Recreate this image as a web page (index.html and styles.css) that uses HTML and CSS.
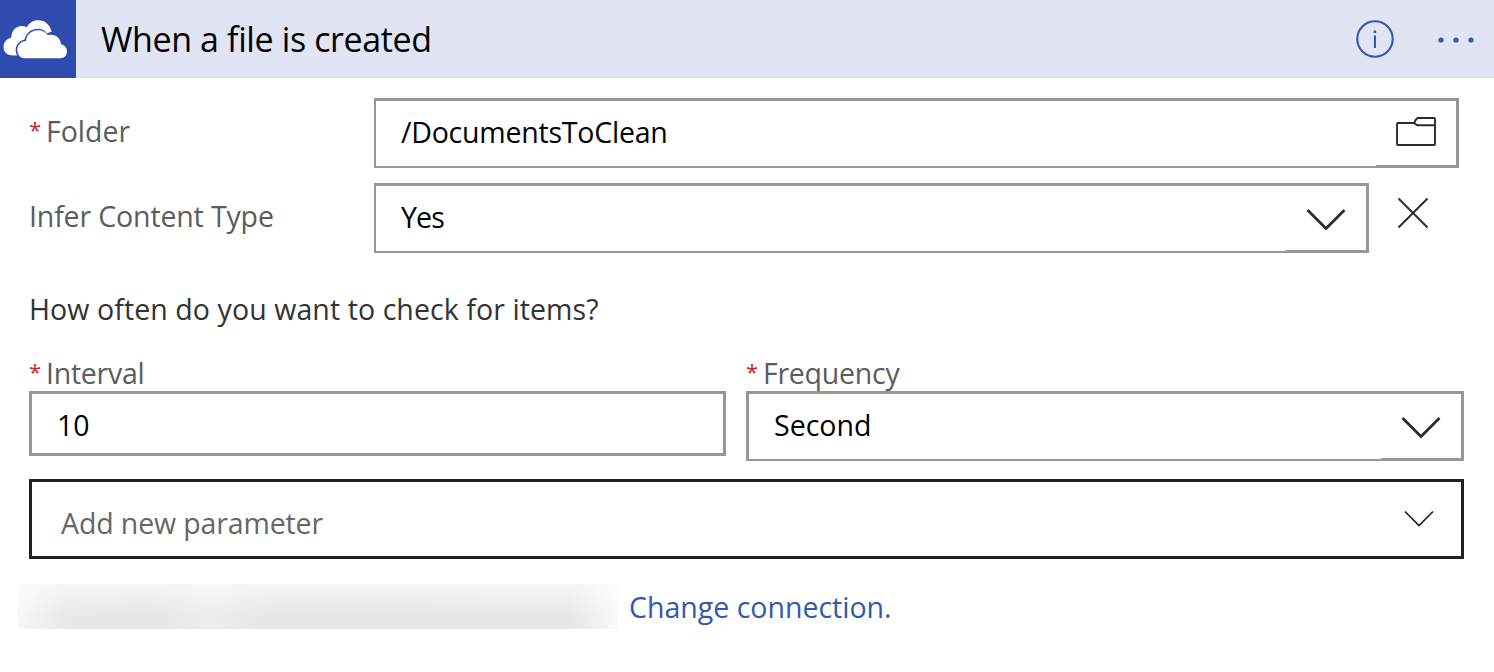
FILE: index.html
```html
<!DOCTYPE html>
<html lang="en">
<head>
<meta charset="utf-8">
<title>When a file is created</title>
<link rel="stylesheet" href="styles.css">
</head>
<body>
<section class="card">
  <header class="card-header">
    <div class="brand">
      <svg width="76" height="78" viewBox="0 0 76 78">
        <path fill="#fff" d="M13.500 55.500C7.500 55.500 3.500 52 3.500 47C3.500 42 7 38.700 11.300 37.800C11.300 31 16 26 21.500 26C23.700 26 25.300 26.400 26.800 27.300C29 23 33 20.300 38 20.300C45 20.300 50.300 25 51.700 32C50 32 48.500 32.600 47 33.600C45 30.500 42 28.700 38 28.700C31.500 28.700 26.500 32.500 24.500 39.500C19 41 15.700 45 15.700 50C15.700 52.200 16.300 54 17.200 55.500Z"/>
        <path fill="#fff" d="M25 58.300C20.500 58.300 17.300 54.700 17.300 50C17.300 45 20.800 41.300 26 41C26.500 34.500 31.500 30.300 38 30.300C42.500 30.300 45.700 32 47.700 35.300C54.500 33.300 60.500 37.500 61 44.300C64.500 45 67 47.800 67 51.300C67 55.300 64.300 58.300 60.500 58.300Z"/>
      </svg>
    </div>
    <h1 class="title">When a file is created</h1>
    <svg class="info" width="40" height="40" viewBox="0 0 40 40">
      <circle cx="20" cy="20" r="17.700" fill="none" stroke="#3159b0" stroke-width="2.100"/>
      <path fill="#3159b0" d="M18.700 11.600h2.500v2.500h-2.500zM18.900 16.600h2.100V29h-2.100z"/>
    </svg>
    <svg class="more" width="40" height="8" viewBox="0 0 40 8">
      <g fill="#3159b0"><circle cx="5" cy="4" r="2.600"/><circle cx="20" cy="4" r="2.600"/><circle cx="35" cy="4" r="2.600"/></g>
    </svg>
  </header>

  <div class="card-body">
    <div class="row">
      <div class="label"><span class="star">*</span><span>Folder</span></div>
      <div class="field folder">
        <span class="value path">/DocumentsToClean</span>
        <span class="field-button">
          <svg width="42" height="32" viewBox="0 0 42 32" fill="none" stroke="#2b2b2d" stroke-width="1.900" stroke-linejoin="round">
            <path d="M20 7H3Q2 7 2 8V28Q2 29 3 29H39Q40 29 40 28V3Q40 2 39 2H23.500Q21.800 2 21 3.500L19.800 5.800Q19 7 20.200 8L21 8.500Q21.700 9.200 23 9.200H40"/>
          </svg>
        </span>
      </div>
    </div>

    <div class="row">
      <div class="label infer">Infer Content Type</div>
      <div class="field">
        <span class="value yes">Yes</span>
        <span class="field-button">
          <svg width="40" height="24" viewBox="0 0 40 24"><path d="M1.500 2L20 20.500L38.500 2" fill="none" stroke="#2b2b2d" stroke-width="2.700"/></svg>
        </span>
      </div>
      <svg class="remove" width="32" height="32" viewBox="0 0 32 32"><path d="M1.500 1.500L30.500 30.500M30.500 1.500L1.500 30.500" stroke="#2b2b2d" stroke-width="1.900"/></svg>
    </div>

    <p class="question">How often do you want to check for items?</p>

    <div class="schedule">
      <div>
        <div class="label top"><span class="star">*</span><span class="name">Interval</span></div>
        <div class="field interval"><span class="value">10</span></div>
      </div>
      <div>
        <div class="label top"><span class="star">*</span><span class="name">Frequency</span></div>
        <div class="field frequency">
          <span class="value">Second</span>
          <span class="field-button">
            <svg width="40" height="24" viewBox="0 0 40 24"><path d="M1.500 2L20 20.500L38.500 2" fill="none" stroke="#2b2b2d" stroke-width="2.700"/></svg>
          </span>
        </div>
      </div>
    </div>

    <div class="add">
      <span>Add new parameter</span>
      <svg width="30" height="18" viewBox="0 0 30 18"><path d="M1 1.500L15 15.500L29 1.500" fill="none" stroke="#202022" stroke-width="1.700"/></svg>
    </div>
  </div>

  <footer class="connection">
    <div class="redacted"></div>
    <a class="change">Change connection.</a>
  </footer>
</section>
</body>
</html>
```
FILE: styles.css
```css
* { box-sizing: border-box; }
body {
  margin: 0;
  background: #fff;
  color: #000;
  font: 400 28.5px/40px "Open Sans", "Noto Sans", sans-serif;
  white-space: nowrap;
}
svg { display: block; flex: none; }

.card-header {
  display: flex;
  align-items: center;
  height: 78px;
  padding-right: 18px;
  background: #e1e4f3;
}
.brand { width: 76px; height: 78px; background: #2e4bad; }
.title {
  flex: 1;
  margin: 0 0 0 25px;
  font-size: 34px;
  font-weight: 400;
  letter-spacing: -0.38px;
}
.info { margin-right: 41px; }
.more { margin-top: 2px; }

.card-body { padding: 20px 30px 0 29px; }
.row { display: flex; height: 70px; margin-bottom: 15px; }
.label { display: flex; width: 345px; padding-top: 13px; color: #5c5c5c; }
.infer { letter-spacing: -0.14px; }
.star { width: 17px; font-size: 22px; line-height: 37px; color: #c8202f; }

.field {
  display: flex;
  justify-content: space-between;
  width: 995px;
  height: 70px;
  padding-left: 25px;
  border: solid #979797;
  border-width: 3px 3px 2px 2px;
}
.folder { width: 1085px; }
.value { padding-top: 11px; }
.path { letter-spacing: -0.22px; }
.yes { letter-spacing: -0.9px; }
.field-button {
  display: flex;
  align-items: center;
  width: 80px;
  padding: 3px 0 0 20px;
  border-bottom: 1px solid #979797;
}
.folder .field-button { padding: 0 0 3px 19px; }
.remove { margin: 14px 0 0 28px; }

.question { margin: 36px 0 24px; color: #333; letter-spacing: 0.09px; }

.schedule { display: grid; grid-template-columns: 697px 718px; column-gap: 20px; height: 108px; }
.label.top { width: auto; height: 38px; padding: 0; }
.label.top .star { line-height: 36px; }
.name { letter-spacing: -0.25px; }
.interval { width: 697px; height: 65px; border-width: 3px; }
.frequency { width: 718px; border-left-width: 3px; }

.add {
  display: flex;
  align-items: center;
  justify-content: space-between;
  width: 1435px;
  height: 80px;
  margin-top: 18px;
  padding: 0 27px 0 29px;
  border: 3px solid #202122;
  color: #666;
  letter-spacing: -0.13px;
}
.add span { padding-top: 8px; }

.connection { display: flex; gap: 11px; margin: 25px 0 0 18px; }
.redacted {
  width: 600px;
  height: 45px;
  background:
    linear-gradient(90deg, rgba(255,255,255,.7), rgba(255,255,255,.1) 8%, rgba(255,255,255,0) 22%, rgba(255,255,255,.3) 32%, rgba(255,255,255,0) 43%, rgba(255,255,255,.05) 92%, rgba(255,255,255,.8)),
    linear-gradient(#f5f5f5, #eeeeee 35%, #e6e6e6 70%, #e5e5e5);
}
.change { color: #3159b0; line-height: 47px; height: 45px; }
```
